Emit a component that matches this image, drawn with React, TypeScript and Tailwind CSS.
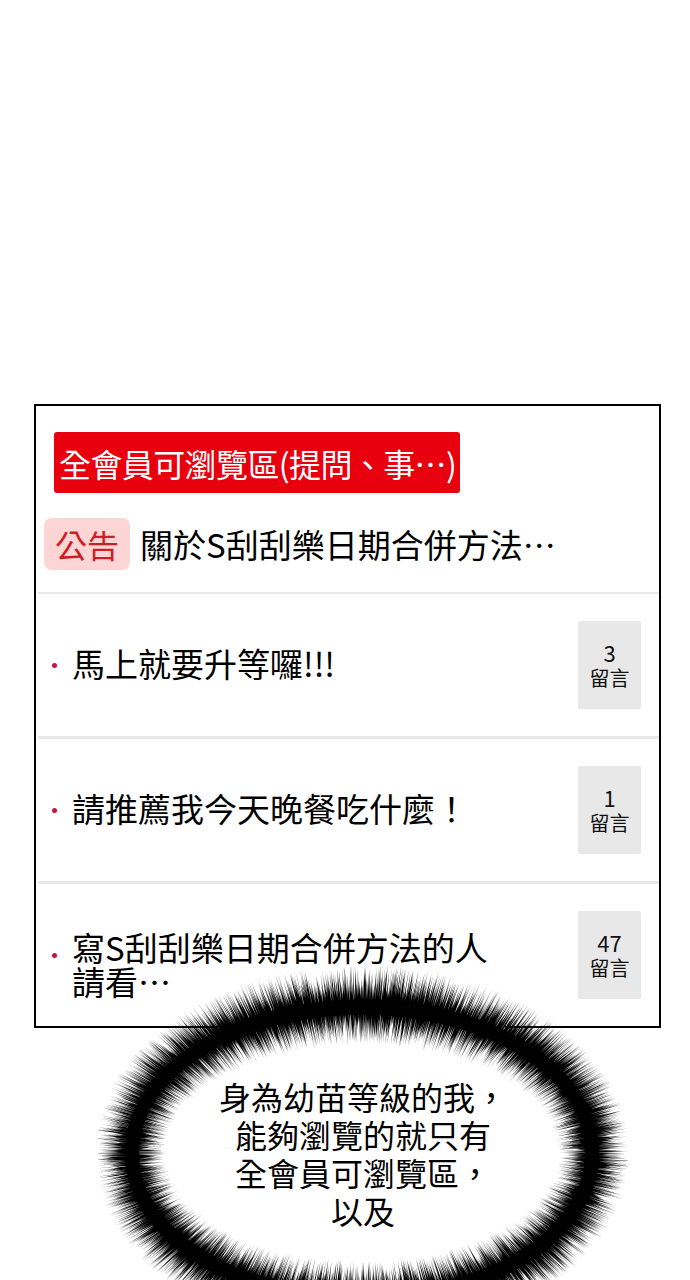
import { useMemo } from 'react';

const FONT = '"Noto Sans CJK TC", "Noto Sans", sans-serif';

interface Post {
  title: string;
  comments: number;
}

const posts: Post[] = [
  { title: '馬上就要升等囉!!!', comments: 3 },
  { title: '請推薦我今天晚餐吃什麼！', comments: 1 },
  { title: '寫S刮刮樂日期合併方法的人請看…', comments: 47 },
];

// seeded random so the burst looks the same every render
function makeRand(seed: number) {
  let s = seed;
  return () => {
    s = (s * 16807) % 2147483647;
    return (s - 1) / 2147483646;
  };
}

function BurstBubble() {
  const cx = 264;
  const cy = 192;
  const inner = { rx: 198, ry: 110 };
  const outer = { rx: 268, ry: 188 };

  const at = (a: number, t: number) => {
    const rx = inner.rx + (outer.rx - inner.rx) * t;
    const ry = inner.ry + (outer.ry - inner.ry) * t;
    return `${(cx + rx * Math.cos(a)).toFixed(1)},${(cy + ry * Math.sin(a)).toFixed(1)}`;
  };

  const spikes = useMemo(() => {
    const rand = makeRand(7);
    let d = '';
    const n = 3000;
    for (let i = 0; i < n; i++) {
      const a = (i / n) * Math.PI * 2 + rand() * 0.003;
      const tIn = -0.04 + rand() * 0.34;
      const tOut = 0.66 + rand() * 0.36;
      const tMid = 0.42 + rand() * 0.1;
      const w = 0.0015 + rand() * 0.0022;
      d += `M${at(a, tIn)}L${at(a - w, tMid)}L${at(a, tOut)}L${at(a + w, tMid)}Z`;
    }
    return d;
  }, []);

  const ring = useMemo(() => {
    const pts: string[] = [];
    const steps = 240;
    for (let i = 0; i <= steps; i++) pts.push(at((i / steps) * Math.PI * 2, 0.36));
    const out: string[] = [];
    for (let i = steps; i >= 0; i--) out.push(at((i / steps) * Math.PI * 2, 0.56));
    return `M${pts.join('L')}ZM${out.join('L')}Z`;
  }, []);

  return (
    <svg width="530" height="330" viewBox="0 0 530 330" className="block">
      <ellipse cx={cx} cy={cy} rx={outer.rx - 30} ry={outer.ry - 30} fill="#fff" />
      <path d={ring} fill="#000" fillRule="evenodd" />
      <path d={spikes} fill="#000" />
    </svg>
  );
}

export default function App() {
  return (
    <div
      className="relative w-[690px] h-[1280px] bg-white overflow-hidden"
      style={{ fontFamily: FONT }}
    >
      <div className="pt-[404px] pl-[34px]">
        <div className="w-[627px] h-[624px] border-2 border-black bg-white flex flex-col">
          {/* board header */}
          <div className="pt-[26px] pl-[18px]">
            <div className="inline-flex items-center h-[61px] w-[406px] bg-[#e8000f] rounded-[3px] pl-[5px] text-white text-[32px] leading-none tracking-[-0.6px] whitespace-nowrap">
              全會員可瀏覽區(提問、事…)
            </div>
          </div>

          {/* notice */}
          <div className="flex items-center mt-[25px] pl-[8px] h-[52px]">
            <span className="flex items-center justify-center w-[86px] h-[52px] rounded-[8px] bg-[#fdd5d5] text-[#cf1d24] text-[32px] leading-none">
              公告
            </span>
            <span className="ml-[10px] text-[33px] leading-none text-black">
              關於S刮刮樂日期合併方法…
            </span>
          </div>

          <div className="mt-[22px] ml-[2px] h-[3px] bg-[#e9e9e9]" />

          {posts.map((p, i) => (
            <div key={i} className="flex flex-col">
              <div className="flex items-center h-[142px] pl-[16px] pr-[18px]">
                <span className="w-[5px] h-[5px] rounded-full bg-[#c8143c] shrink-0 self-center" />
                <div
                  className={`ml-[15px] w-[430px] text-[33px] text-black ${
                    i === 2 ? 'leading-[34px] mt-[18px]' : 'leading-none -mt-[4px]'
                  }`}
                >
                  {p.title}
                </div>
                <div className="ml-auto flex flex-col items-center justify-center w-[63px] h-[88px] bg-[#e8e8e8] rounded-[2px] text-[#111]">
                  <span className="text-[22px] leading-[26px]">{p.comments}</span>
                  <span className="text-[20px] leading-[26px]">留言</span>
                </div>
              </div>
              {i < posts.length - 1 && <div className="ml-[2px] h-[3px] bg-[#e9e9e9]" />}
            </div>
          ))}
        </div>
      </div>

      {/* speech burst overlapping the panel */}
      <div className="absolute left-[98px] top-[961px]">
        <BurstBubble />
        <p className="absolute left-0 top-[116px] w-[530px] text-center text-[32px] leading-[38px] text-black">
          身為幼苗等級的我，
          <br />
          能夠瀏覽的就只有
          <br />
          全會員可瀏覽區，
          <br />
          以及
        </p>
      </div>
    </div>
  );
}
